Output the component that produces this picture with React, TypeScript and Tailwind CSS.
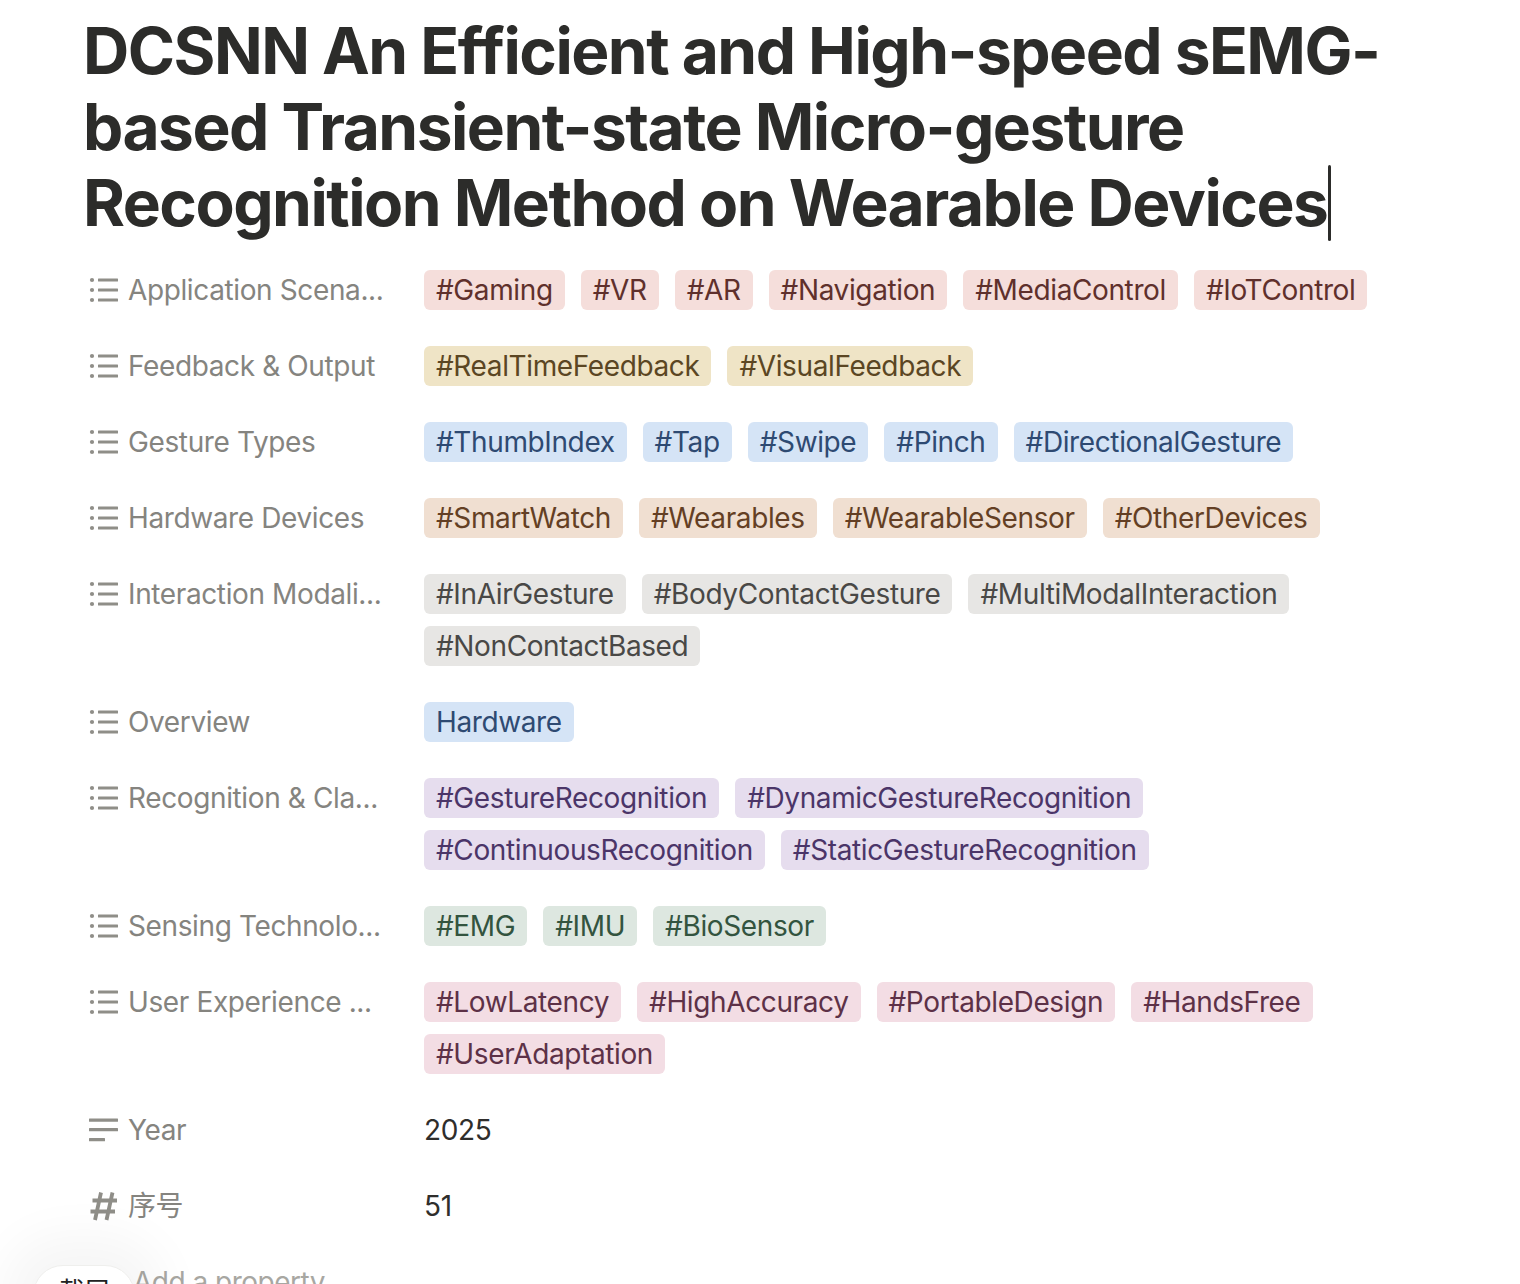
import type { ReactNode } from 'react';

type TagColor = 'red' | 'yellow' | 'blue' | 'brown' | 'gray' | 'purple' | 'green' | 'pink';

const tagStyles: Record<TagColor, string> = {
  red: 'bg-[#f5dedb] text-[#5f302c]',
  yellow: 'bg-[#efe4c6] text-[#5b4623]',
  blue: 'bg-[#d5e4f6] text-[#2e4a72]',
  brown: 'bg-[#f0dfd1] text-[#643f24]',
  gray: 'bg-[#e7e6e4] text-[#494846]',
  purple: 'bg-[#e6ddee] text-[#4b3568]',
  green: 'bg-[#dde7e0] text-[#33543f]',
  pink: 'bg-[#f3dde4] text-[#5d3147]',
};

const rows: { label: string; color: TagColor; tags: string[] }[] = [
  { label: 'Application Scena...', color: 'red', tags: ['#Gaming', '#VR', '#AR', '#Navigation', '#MediaControl', '#IoTControl'] },
  { label: 'Feedback & Output', color: 'yellow', tags: ['#RealTimeFeedback', '#VisualFeedback'] },
  { label: 'Gesture Types', color: 'blue', tags: ['#ThumbIndex', '#Tap', '#Swipe', '#Pinch', '#DirectionalGesture'] },
  { label: 'Hardware Devices', color: 'brown', tags: ['#SmartWatch', '#Wearables', '#WearableSensor', '#OtherDevices'] },
  { label: 'Interaction Modali...', color: 'gray', tags: ['#InAirGesture', '#BodyContactGesture', '#MultiModalInteraction', '#NonContactBased'] },
  { label: 'Overview', color: 'blue', tags: ['Hardware'] },
  { label: 'Recognition & Cla...', color: 'purple', tags: ['#GestureRecognition', '#DynamicGestureRecognition', '#ContinuousRecognition', '#StaticGestureRecognition'] },
  { label: 'Sensing Technolo...', color: 'green', tags: ['#EMG', '#IMU', '#BioSensor'] },
  { label: 'User Experience ...', color: 'pink', tags: ['#LowLatency', '#HighAccuracy', '#PortableDesign', '#HandsFree', '#UserAdaptation'] },
];

function ListIcon() {
  return (
    <svg width="30" height="26" viewBox="0 0 30 26" fill="#8f8e88" className="shrink-0">
      <circle cx="4" cy="3" r="2.1" />
      <circle cx="4" cy="13" r="2.1" />
      <circle cx="4" cy="23" r="2.1" />
      <rect x="10" y="1.4" width="20" height="3.2" rx="0.5" />
      <rect x="10" y="11.4" width="20" height="3.2" rx="0.5" />
      <rect x="10" y="21.4" width="20" height="3.2" rx="0.5" />
    </svg>
  );
}

function TextIcon() {
  return (
    <svg width="30" height="24" viewBox="0 0 30 24" fill="#8f8e88" className="shrink-0">
      <rect x="1" y="0.5" width="29" height="3.2" rx="0.5" />
      <rect x="1" y="10" width="29" height="3.2" rx="0.5" />
      <rect x="1" y="20" width="16" height="3.2" rx="0.5" />
    </svg>
  );
}

function HashIcon() {
  return (
    <svg width="30" height="30" viewBox="0 0 30 30" fill="none" stroke="#8f8e88" strokeWidth="3.8" className="shrink-0">
      <path d="M13 1.500 7 29M24.500 1.500 18.500 29M4.500 9.500H29M2.500 20.500H27" />
    </svg>
  );
}

function PropertyRow({ icon, label, children }: { icon: ReactNode; label: string; children: ReactNode }) {
  return (
    <div className="flex items-start">
      <div className="flex h-10 w-[340px] shrink-0 items-center pl-[4px] text-[#85847f]">
        <span className="flex w-[40px] shrink-0 items-center">{icon}</span>
        <span className="whitespace-nowrap">{label}</span>
      </div>
      <div className="min-w-0 flex-1">{children}</div>
    </div>
  );
}

export default function App() {
  return (
    <div className="relative h-[1284px] w-[1520px] overflow-hidden bg-white pl-[84px] font-['Inter','Noto_Sans_CJK_SC',sans-serif] text-[28px] leading-10 tracking-[-0.38px] text-[#2f2e2c]">
      <h1 className="-ml-px w-[1340px] pt-[13px] text-[64px] leading-[76px] font-bold tracking-[-1.52px] text-[#2c2c2a]">
        DCSNN An Efficient and High-speed sEMG-based Transient-state Micro-gesture Recognition Method on Wearable Devices
        <span className="ml-px inline-block h-[76px] w-[3px] rounded-sm bg-[#2c2c2a] align-top" />
      </h1>
      <div className="mt-[29px] flex w-[1300px] flex-col gap-9">
        {rows.map((row) => (
          <PropertyRow key={row.label} icon={<ListIcon />} label={row.label}>
            <div className="flex flex-wrap gap-x-4 gap-y-3">
              {row.tags.map((tag) => (
                <span key={tag} className={`h-10 whitespace-nowrap rounded-md px-3 ${tagStyles[row.color]}`}>
                  {tag}
                </span>
              ))}
            </div>
          </PropertyRow>
        ))}
        <PropertyRow icon={<TextIcon />} label="Year">2025</PropertyRow>
        <PropertyRow icon={<HashIcon />} label="序号">51</PropertyRow>
        <div className="flex h-10 items-center pl-[49px] tracking-[-0.5px] text-[#a8a7a2]">Add a property</div>
      </div>
      <div className="absolute top-[1265px] left-[33px] h-[60px] w-[102px] rounded-[30px] border border-[#efefed] bg-white pt-[6px] text-center text-[26px] text-[#222] shadow-[0_0_50px_30px_rgba(0,0,0,0.04)]">
        截屏
      </div>
    </div>
  );
}
